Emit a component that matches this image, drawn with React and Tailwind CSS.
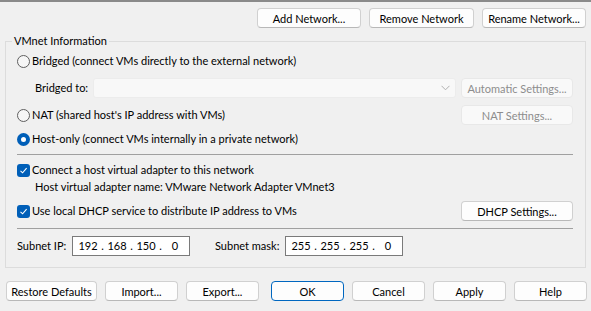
import React from "react";

const font = { fontFamily: 'Lato, "Noto Sans", sans-serif' };

function Btn({ children, className = "", disabled, primary }) {
  return (
    <button
      className={
        "h-[20px] rounded-[4px] border text-[11px] leading-none whitespace-nowrap flex items-center justify-center " +
        (disabled
          ? "bg-[#f9f9f9] border-[#e8e8e8] text-[#8d8d8d] "
          : primary
          ? "bg-[#fdfdfd] border-[#0067c0] text-black "
          : "bg-[#fdfdfd] border-[#d0d0d0] border-b-[#b8b8b8] text-black ") +
        className
      }
    >
      {children}
    </button>
  );
}

function Radio({ checked }) {
  return checked ? (
    <span className="w-[13px] h-[13px] rounded-full bg-[#005fb8] flex items-center justify-center shrink-0">
      <span className="w-[5px] h-[5px] rounded-full bg-white" />
    </span>
  ) : (
    <span className="w-[13px] h-[13px] rounded-full border border-[#5f5f5f] bg-[#f6f6f6] shrink-0" />
  );
}

function Check() {
  return (
    <span className="w-[13px] h-[13px] rounded-[3px] bg-[#005fb8] flex items-center justify-center shrink-0">
      <svg width="9" height="9" viewBox="0 0 9 9" fill="none">
        <path d="M1.5 4.8 L3.6 6.8 L7.6 2.2" stroke="white" strokeWidth="1.1" />
      </svg>
    </span>
  );
}

function IpBox({ parts }) {
  return (
    <div className="w-[118px] h-[20px] bg-white border border-[#7a7a7a] flex items-center pl-[3px] text-black">
      {parts.map((p, i) => (
        <React.Fragment key={i}>
          <span className="w-[24px] text-center">{p}</span>
          {i < 3 && <span className="w-[5px] text-center">.</span>}
        </React.Fragment>
      ))}
    </div>
  );
}

export default function App() {
  return (
    <div className="w-[591px] h-[311px] bg-[#f0f0f0] text-[11px] text-black whitespace-nowrap overflow-hidden" style={font}>
      <div className="h-[2px] bg-[#8a8a8a]" />

      <div className="mt-[6px] flex justify-end gap-[8px] pr-[5px]">
        <Btn className="w-[104px]">Add Network...</Btn>
        <Btn className="w-[105px]">Remove Network</Btn>
        <Btn className="w-[104px]">Rename Network...</Btn>
      </div>

      <fieldset className="mt-[5px] mx-[5px] border border-[#dcdcdc] pl-[11px] pr-[12px] pb-[11px]">
        <legend className="-ml-[5px] px-[2px] h-[16px] leading-[16px]">VMnet Information</legend>

        <div className="mt-[2px] h-[20px] flex items-center gap-[2px]">
          <Radio />
          <span>Bridged (connect VMs directly to the external network)</span>
        </div>

        <div className="mt-[7px] h-[20px] flex items-center">
          <span className="ml-[18px] w-[58px]">Bridged to:</span>
          <div className="w-[363px] h-[20px] rounded-[3px] bg-[#f8f8f8] border border-[#ececec] flex items-center justify-end pr-[5px]">
            <svg width="9" height="6" viewBox="0 0 9 6" fill="none">
              <path d="M0.5 0.8 L4.5 4.8 L8.5 0.8" stroke="#b0b0b0" strokeWidth="1" />
            </svg>
          </div>
          <Btn disabled className="ml-auto w-[112px]">Automatic Settings...</Btn>
        </div>

        <div className="mt-[7px] h-[20px] flex items-center gap-[2px]">
          <Radio />
          <span>NAT (shared host's IP address with VMs)</span>
          <Btn disabled className="ml-auto w-[112px]">NAT Settings...</Btn>
        </div>

        <div className="mt-[4px] h-[20px] flex items-center gap-[2px]">
          <Radio checked />
          <span>Host-only (connect VMs internally in a private network)</span>
        </div>

        <div className="mt-[5px] h-px bg-[#a0a0a0]" />

        <div className="mt-[6px] h-[18px] flex items-center gap-[2px]">
          <Check />
          <span>Connect a host virtual adapter to this network</span>
        </div>
        <div className="h-[16px] flex items-center pl-[18px]">
          Host virtual adapter name: VMware Network Adapter VMnet3
        </div>

        <div className="mt-[6px] h-[20px] flex items-center gap-[2px]">
          <Check />
          <span>Use local DHCP service to distribute IP address to VMs</span>
          <Btn className="ml-auto w-[112px]">DHCP Settings...</Btn>
        </div>

        <div className="mt-[7px] h-px bg-[#a0a0a0]" />

        <div className="mt-[7px] h-[20px] flex items-center">
          <span className="w-[55px]">Subnet IP:</span>
          <IpBox parts={["192", "168", "150", "0"]} />
          <span className="ml-[25px] w-[70px]">Subnet mask:</span>
          <IpBox parts={["255", "255", "255", "0"]} />
        </div>
      </fieldset>

      <div className="mt-[13px] flex items-center pl-[6px]">
        <Btn className="w-[91px]">Restore Defaults</Btn>
        <Btn className="ml-[8px] w-[73px]">Import...</Btn>
        <Btn className="ml-[8px] w-[73px]">Export...</Btn>
        <Btn primary className="ml-[12px] w-[73px]">OK</Btn>
        <Btn className="ml-[8px] w-[73px]">Cancel</Btn>
        <Btn className="ml-[8px] w-[73px]">Apply</Btn>
        <Btn className="ml-[8px] w-[73px]">Help</Btn>
      </div>
    </div>
  );
}
